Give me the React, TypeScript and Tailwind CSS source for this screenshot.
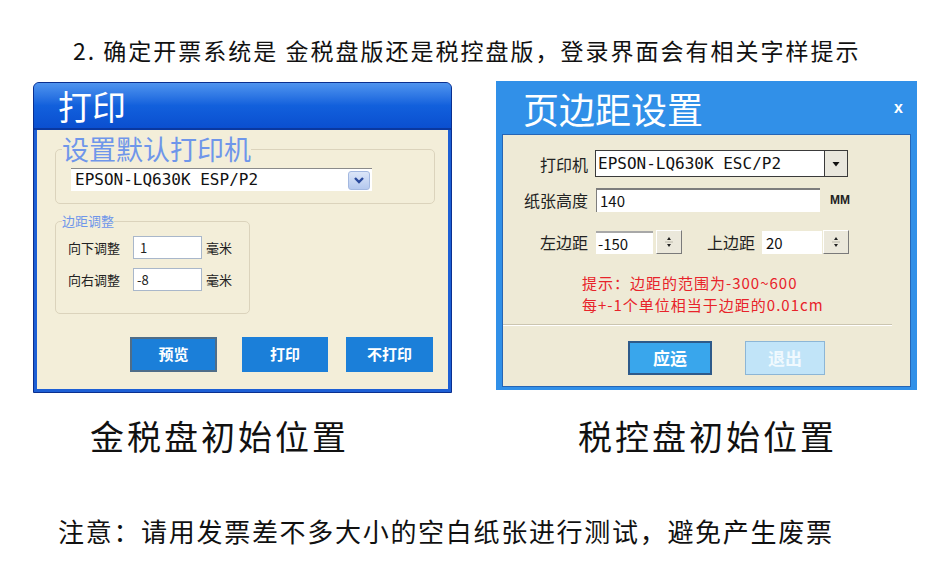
import React from 'react';

const cjk = "font-['Noto_Sans_CJK_SC','Noto_Sans',sans-serif]";
const mono = "font-['DejaVu_Sans_Mono','Liberation_Mono',monospace]";

// little up/down spinner used on the 税控盘 dialog
const Spinner: React.FC = () => (
  <div className="w-[26px] h-[24px] bg-[#ebe8db] border-t border-l border-white border-r border-b border-r-[#7a7a7a] border-b-[#7a7a7a] flex items-center justify-center">
    <svg width="10" height="16" viewBox="0 0 10 16">
      <path d="M5 3 L7 6 L3 6 Z" fill="#222" />
      <line x1="1" y1="8" x2="9" y2="8" stroke="#b9b6a8" strokeWidth="1" />
      <path d="M3 10 L7 10 L5 13 Z" fill="#222" />
    </svg>
  </div>
);

const JinShuiDialog: React.FC = () => (
  <div className="w-[419px] h-[311px] mt-[1px] flex flex-col bg-[#1d5fd5] border border-[#0a2f8f] rounded-t-[6px] overflow-hidden">
    <div className="h-[47px] shrink-0 bg-gradient-to-b from-[#4f94ee] via-[#1260dc] to-[#0b4fd0] border-b-2 border-[#0a38a0] flex items-center pl-[24px]">
      <span className="text-white text-[34px] leading-none">打印</span>
    </div>
    <div className="flex-1 mx-[3px] mb-[3px] bg-[#f3eed9] flex flex-col">
      <fieldset className="ml-[18px] mt-[4px] w-[380px] border border-[#dbd3bc] rounded-[5px] px-[6px] pb-[12px]">
        <legend className="text-[27px] leading-[30px] text-[#6f96ea]">设置默认打印机</legend>
        <div className="ml-[9px] mt-[4px] w-[301px] h-[23px] bg-white border-t border-[#8a8a8a] flex items-center justify-between pr-[2px]">
          <span className={`${mono} text-[16px] pl-[4px] text-[#111]`}>EPSON-LQ630K ESP/P2</span>
          <div className="w-[22px] h-[19px] rounded-[3px] border border-[#a3b8e0] bg-gradient-to-b from-[#dce6f8] to-[#b4c8ee] flex items-center justify-center">
            <svg width="12" height="10" viewBox="0 0 12 10">
              <path d="M2 3 L6 7 L10 3" fill="none" stroke="#2a4a9c" strokeWidth="2.4" />
            </svg>
          </div>
        </div>
      </fieldset>

      <fieldset className="ml-[18px] mt-[9px] w-[195px] border border-[#dbd3bc] rounded-[5px] px-[6px] pb-[22px]">
        <legend className="text-[13px] leading-[16px] text-[#6f96ea]">边距调整</legend>
        <div className="flex items-center ml-[6px] mt-[7px] text-[13px] text-[#222]">
          <span className="w-[65px]">向下调整</span>
          <div className="w-[69px] h-[23px] bg-white border border-[#a9b7ca] pl-[6px] leading-[21px]">1</div>
          <span className="ml-[4px]">毫米</span>
        </div>
        <div className="flex items-center ml-[6px] mt-[9px] text-[13px] text-[#222]">
          <span className="w-[65px]">向右调整</span>
          <div className="w-[69px] h-[23px] bg-white border border-[#a9b7ca] pl-[3px] leading-[21px]">-8</div>
          <span className="ml-[4px]">毫米</span>
        </div>
      </fieldset>

      <div className="flex ml-[93px] mt-[23px]">
        <button className="w-[87px] h-[35px] bg-[#1b7fd9] border-2 border-[#4f6d88] text-white font-bold text-[15px]">预览</button>
        <button className="ml-[25px] w-[86px] h-[35px] bg-[#1b7fd9] text-white font-bold text-[15px]">打印</button>
        <button className="ml-[18px] w-[87px] h-[35px] bg-[#1b7fd9] text-white font-bold text-[15px]">不打印</button>
      </div>
    </div>
  </div>
);

const ShuiKongDialog: React.FC = () => (
  <div className="w-[421px] h-[309px] flex flex-col bg-[#3190e8]">
    <div className="h-[53px] shrink-0 flex items-center justify-between pl-[27px] pr-[14px]">
      <span className="text-white text-[36px] leading-none">页边距设置</span>
      <span className="text-white font-bold text-[16px] leading-none font-['Liberation_Sans',sans-serif]">x</span>
    </div>
    <div className="flex-1 mx-[6px] mb-[3px] bg-[#eeead6] border border-[#2565b5] flex flex-col text-[16px] text-[#222]">
      <div className="flex items-center mt-[15px]">
        <span className="w-[85px] text-right">打印机</span>
        <div className="ml-[7px] w-[253px] h-[27px] bg-white border border-[#3a3a3a] flex items-stretch justify-between">
          <span className={`${mono} text-[16px] leading-[25px] pl-[2px] text-[#111]`}>EPSON-LQ630K ESC/P2</span>
          <div className="w-[23px] bg-[#e9e7dd] border-l border-[#3a3a3a] flex items-center justify-center">
            <svg width="10" height="8" viewBox="0 0 10 8">
              <path d="M1.5 2 L8.5 2 L5 6.5 Z" fill="#111" />
            </svg>
          </div>
        </div>
      </div>

      <div className="flex items-center mt-[11px]">
        <span className="w-[85px] text-right">纸张高度</span>
        <div className="ml-[8px] w-[224px] h-[24px] bg-white border-t-2 border-l border-[#7d7d7d] pl-[3px] text-[15px] leading-[22px] text-[#111]">140</div>
        <span className="ml-[10px] text-[12px] font-bold font-['Liberation_Sans',sans-serif]">MM</span>
      </div>

      <div className="flex items-center mt-[18px]">
        <span className="w-[85px] text-right">左边距</span>
        <div className="ml-[8px] w-[57px] h-[23px] bg-white border-t-2 border-[#a8a8a8] pl-[2px] text-[15px] leading-[21px] text-[#111]">-150</div>
        <div className="ml-[3px]"><Spinner /></div>
        <span className="ml-[25px] w-[50px]">上边距</span>
        <div className="ml-[5px] w-[60px] h-[23px] bg-white pl-[4px] text-[15px] leading-[23px] text-[#111]">20</div>
        <div className="ml-[1px]"><Spinner /></div>
      </div>

      <div className="mt-[18px] pl-[79px] text-[15px] leading-[22px] tracking-[1px] text-[#e8232a]">
        <div>提示：边距的范围为-300~600</div>
        <div>每+-1个单位相当于边距的0.01cm</div>
      </div>

      <div className="mt-[8px] mr-[18px] border-t border-[#cbc5b0] border-b border-b-white" />

      <div className="flex pl-[125px] mt-[15px]">
        <button className="w-[84px] h-[34px] bg-[#39a6ec] border-2 border-[#2d5a8a] text-white font-bold text-[17px]">应运</button>
        <button className="ml-[33px] w-[80px] h-[34px] bg-[#c1e4f8] border border-[#8cb6d6] text-[#f0f9fe] font-bold text-[17px]">退出</button>
      </div>
    </div>
  </div>
);

export default function App() {
  return (
    <div className={`${cjk} w-[941px] h-[566px] bg-white overflow-hidden flex flex-col text-[#111]`}>
      <p className="mt-[35px] pl-[73px] text-[23px] leading-[30px] tracking-[2px]">
        2. 确定开票系统是 金税盘版还是税控盘版，登录界面会有相关字样提示
      </p>

      <div className="flex items-start mt-[16px] pl-[33px] gap-[44px]">
        <JinShuiDialog />
        <ShuiKongDialog />
      </div>

      <div className="flex mt-[21px] text-[34px] leading-[44px] tracking-[3px]">
        <span className="w-[488px] pl-[90px]">金税盘初始位置</span>
        <span className="pl-[90px]">税控盘初始位置</span>
      </div>

      <p className="mt-[55px] pl-[58px] text-[26px] leading-[36px] tracking-[1.7px]">
        注意：请用发票差不多大小的空白纸张进行测试，避免产生废票
      </p>
    </div>
  );
}
